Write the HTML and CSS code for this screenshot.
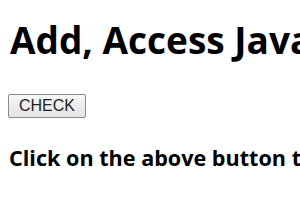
FILE: index.html
```html
<!DOCTYPE html>
<html lang="en">

<head>
  <meta charset="UTF-8">
  <meta name="viewport" content="width=device-width, initial-scale=1.0">
  <title>Add, Access JavaScript Object Methods</title>
  <link rel="stylesheet" href="styles.css">
</head>

<body>
  <h1 class="title">Add, Access JavaScript Object Methods</h1>
  <button class="check-btn">CHECK</button>
  <h3 class="sample">Click on the above button to add and access the object method</h3>
  <div class="result"></div>
</body>

</html>
```

FILE: styles.css
```css
body {
  margin: 0;
  padding: 0 8px;
  font-family: "Open Sans", sans-serif;
  color: #000;
  white-space: nowrap;
  overflow: hidden;
}

.title {
  font-size: 37px;
  font-weight: bold;
  margin: 14px 0 29px 0;
  padding-left: 2px;
}

.check-btn {
  font-family: "Liberation Sans", Arial, sans-serif;
  font-size: 16px;
  color: #222;
  padding: 2px 10px;
  border: 1px solid #8a8a8a;
  border-radius: 2px;
  background: linear-gradient(#f7f7f7, #e3e3e3);
}

.sample {
  font-size: 21.6px;
  font-weight: bold;
  margin: 25px 0;
  padding-left: 1px;
}
```
